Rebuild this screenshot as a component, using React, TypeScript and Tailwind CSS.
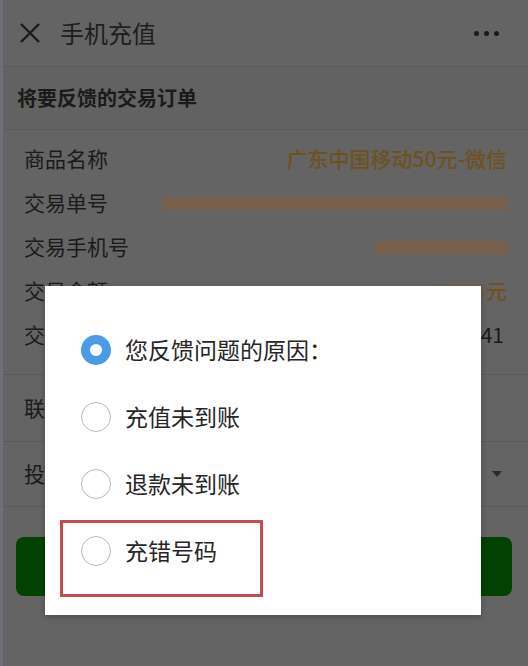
import React from 'react';

const rows = [
  { label: '商品名称', value: 'text' },
  { label: '交易单号', value: 'blurLong' },
  { label: '交易手机号', value: 'blurShort' },
  { label: '交易金额', value: 'amount' },
  { label: '交易时间', value: 'time' },
];

const options = [
  { text: '您反馈问题的原因：', checked: true },
  { text: '充值未到账', checked: false },
  { text: '退款未到账', checked: false },
  { text: '充错号码', checked: false },
];

const Radio: React.FC<{ checked: boolean }> = ({ checked }) =>
  checked ? (
    <div className="h-[30px] w-[30px] rounded-full bg-[#4d9be6] flex items-center justify-center flex-shrink-0">
      <div className="h-[12px] w-[12px] rounded-full bg-white" />
    </div>
  ) : (
    <div className="h-[30px] w-[30px] rounded-full border-[1.5px] border-[#b8b8b8] bg-white flex-shrink-0" />
  );

const App: React.FC = () => {
  return (
    <div
      className="relative w-[528px] h-[666px] overflow-hidden bg-[#646464] text-[#1a1a1a] border-l-[3px] border-[#6c7179]"
      style={{ fontFamily: '"Noto Sans CJK SC", "Noto Sans", sans-serif' }}
    >
      {/* 顶部导航 */}
      <div className="h-[67px] flex items-center pl-[16px] pr-[19px] border-b border-[#5b5b5b]">
        <svg width="22" height="22" viewBox="0 0 22 22" className="flex-shrink-0">
          <path d="M2 2 L20 20 M20 2 L2 20" stroke="#1a1a1a" strokeWidth="2.4" fill="none" />
        </svg>
        <span className="ml-[19px] text-[24px] leading-none text-[#1e1e1e]">手机充值</span>
        <div className="ml-auto flex gap-[5px] pr-[10px]">
          <span className="h-[5px] w-[5px] rounded-full bg-[#1a1a1a]" />
          <span className="h-[5px] w-[5px] rounded-full bg-[#1a1a1a]" />
          <span className="h-[5px] w-[5px] rounded-full bg-[#1a1a1a]" />
        </div>
      </div>

      {/* 标题 */}
      <div className="h-[63px] flex items-center pl-[14px] bg-[#626262] border-b border-[#5b5b5b]">
        <span className="text-[20px] font-bold text-[#1a1a1a]">将要反馈的交易订单</span>
      </div>

      {/* 订单信息 */}
      <div className="pl-[21px] pr-[21px] pt-[7px] pb-[17px] border-b border-[#595959]">
        {rows.map((r) => (
          <div key={r.label} className="h-[44px] flex items-center justify-between text-[21px]">
            <span>{r.label}</span>
            {r.value === 'text' && <span className="text-[#6f5120] font-medium">广东中国移动50元-微信</span>}
            {r.value === 'blurLong' && <div className="h-[13px] w-[344px] bg-[#7a604a] blur-[1.5px]" />}
            {r.value === 'blurShort' && <div className="h-[13px] w-[132px] bg-[#7a604a] blur-[1.5px]" />}
            {r.value === 'amount' && (
              <div className="flex items-center gap-[2px]">
                <div className="h-[13px] w-[50px] bg-[#705c4a] blur-[1.5px]" />
                <span className="text-[#6f5120] font-medium">元</span>
              </div>
            )}
            {r.value === 'time' && <span className="mr-[3px]">2018-03-15 12:41</span>}
          </div>
        ))}
      </div>

      <div className="h-[67px] flex items-center px-[21px] text-[21px] border-b border-[#595959]">
        <span>联系方式</span>
      </div>

      <div className="h-[65px] flex items-center px-[21px] text-[21px] border-b border-[#595959]">
        <span>投诉原因</span>
        <svg width="10" height="6" viewBox="0 0 10 6" className="ml-auto mr-[5px]">
          <path d="M0 0 L10 0 L5 6 Z" fill="#2a2a2a" />
        </svg>
      </div>

      <div className="mt-[30px] ml-[13px] mr-[16px] h-[59px] rounded-[8px] bg-[#034203]" />

      {/* 弹窗 */}
      <div className="absolute left-[42px] top-[286px] w-[436px] h-[329px] bg-white shadow-[0_2px_6px_rgba(0,0,0,0.25)] pt-[30px]">
        {options.map((o) => (
          <div key={o.text} className="h-[67px] flex items-center pl-[36px]">
            <Radio checked={o.checked} />
            <span className="ml-[14px] text-[23px] text-[#262626]">{o.text}</span>
          </div>
        ))}
        <div className="absolute left-[15px] top-[234px] w-[203px] h-[77px] border-[3px] border-[#c94a4a]" />
      </div>
    </div>
  );
};

export default App;
